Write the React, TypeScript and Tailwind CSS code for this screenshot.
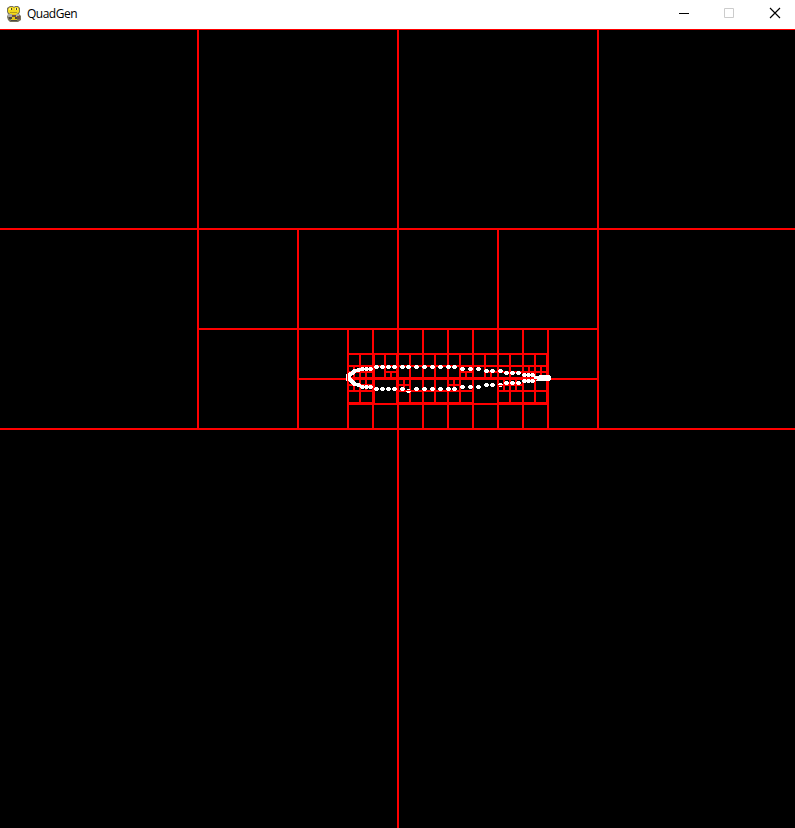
type Seg = [number, number, number, number];

// Each entry is x, y, width, height of one painted grid line.
const lines: Seg[] = [
  [0, 29, 795, 1],
  [0, 228, 795, 2], [0, 428, 795, 2],
  [197, 29, 2, 401], [397, 29, 2, 799], [597, 29, 2, 401],
  [197, 328, 402, 2], [297, 228, 2, 202], [497, 228, 2, 202],
  [297, 378, 302, 2],
  [347, 328, 2, 102], [547, 328, 2, 102],
  [372, 328, 2, 102], [422, 328, 2, 102], [447, 328, 2, 102], [472, 328, 2, 102], [522, 328, 2, 102],
  [347, 353, 202, 2], [347, 403, 202, 2], [347, 402, 27, 2], [397, 402, 77, 2], [497, 402, 52, 2],
  [347, 377, 202, 3], [372, 353, 3, 52], [396, 353, 3, 52], [546, 353, 3, 52],
  [347, 365, 202, 2],
  [359, 353, 2, 52], [384, 353, 2, 27], [409, 353, 2, 52], [434, 353, 2, 52],
  [459, 353, 2, 52], [484, 353, 2, 27], [509, 353, 2, 52], [534, 353, 2, 52],
  [347, 390, 27, 2], [397, 390, 77, 2], [497, 390, 52, 2],
  [347, 371, 27, 2], [353, 365, 2, 26], [365, 365, 2, 26], [347, 384, 27, 2],
  [384, 371, 14, 2], [390, 371, 2, 8],
  [403, 378, 2, 13], [397, 384, 13, 2],
  [453, 378, 2, 13], [447, 384, 13, 2],
  [459, 371, 14, 2], [465, 371, 2, 8], [484, 371, 14, 2], [490, 371, 2, 8],
  [497, 371, 52, 2], [503, 378, 2, 13], [497, 384, 26, 2], [515, 378, 2, 13],
  [528, 365, 2, 14], [540, 365, 2, 14], [528, 378, 2, 5],
];

const upper: [number, number][] = [
  [350, 374], [352, 373], [354, 371], [358, 370], [362, 369], [366, 369], [370, 369],
  [376, 367], [382, 367], [388, 367], [394, 367], [402, 367], [408, 367], [416, 367], [424, 367],
  [432, 367], [440, 367], [448, 367], [454, 367], [462, 369], [470, 369], [478, 369], [486, 371],
  [492, 371], [500, 371], [506, 373], [512, 373], [518, 373], [524, 375], [528, 375], [532, 375],
];
const lower: [number, number][] = [
  [350, 380], [352, 382], [354, 384], [358, 385], [362, 387], [366, 387], [370, 387],
  [376, 389], [382, 389], [388, 389], [394, 389], [402, 389], [408, 391], [416, 389], [424, 389],
  [432, 389], [440, 389], [448, 389], [454, 389], [462, 387], [470, 387], [478, 387], [486, 385],
  [492, 385], [500, 385], [506, 383], [512, 383], [518, 383], [524, 381], [528, 381], [532, 381],
];

function Dot({ x, y }: { x: number; y: number }) {
  return <path d={`M${x - 1} ${y - 2}h3v1h1v2h-1v1h-3v-1h-1v-2h1z`} fill="#fff" />;
}

function Snake() {
  return (
    <svg className="ml-[6px] h-4 w-4 shrink-0" viewBox="0 0 16 16" aria-hidden="true">
      <path d="M4 0h3l1 1 1-1h3l2 2v4l-1 2 2 2v4l-3 2H4l-2-2-1-3 1-3-1-2V2z" fill="#77735d" />
      <path d="M4 1h3l1 1 1-1h3l1 2v3l-2 2H4L2 6V3z" fill="#f3d91c" />
      <path d="M3 2h3v2H3zM9 2h3v2H9z" fill="#fff56b" />
      <path d="M5 2h1v2H5zM10 2h1v2h-1z" fill="#504526" />
      <path d="M4 6h7v1H4z" fill="#b59c1d" />
      <path d="M5 8h6v6H5z" fill="#e4c51b" />
      <path d="M2 8h4v3H2zM10 8h3v2h-3z" fill="#aaa9a3" />
      <path d="M6 9h4v2H6zM11 10h3v3h-3z" fill="#735047" />
      <path d="M3 11h3v2H3zM9 11h2v2H9zM5 14h6v1H5z" fill="#4b4840" />
    </svg>
  );
}

export default function App() {
  return (
    <main className="flex h-[828px] w-[795px] flex-col overflow-hidden bg-black">
      <header className="flex h-[29px] shrink-0 items-start bg-white">
        <div className="flex h-[27px] items-center">
          <Snake />
          <h1 className="ml-[5px] font-['Open_Sans',sans-serif] text-[12px] leading-4 font-normal tracking-[-0.5px] text-black">QuadGen</h1>
        </div>
        <div className="ml-auto flex h-[27px]">
          <button aria-label="Minimize" className="w-[45px]">
            <svg width="45" height="27" shapeRendering="crispEdges"><path d="M20 13h10v1H20z" /></svg>
          </button>
          <button aria-label="Maximize" disabled className="w-[45px]">
            <svg width="45" height="27"><path d="M20.5 8.5h9v9h-9z" fill="none" stroke="#ccc" /></svg>
          </button>
          <button aria-label="Close" className="w-[46px]">
            <svg width="46" height="27"><path d="M21 8l10 10M31 8L21 18" fill="none" stroke="#000" strokeWidth="1.15" /></svg>
          </button>
        </div>
      </header>
      <svg className="block shrink-0" width="795" height="799" viewBox="0 29 795 799" shapeRendering="crispEdges">
        <g fill="#f00">
          {lines.map(([x, y, w, h], i) => <rect key={i} x={x} y={y} width={w} height={h} />)}
        </g>
        {upper.map(([x, y], i) => <Dot key={i} x={x} y={y} />)}
        {lower.map(([x, y], i) => <Dot key={i} x={x} y={y} />)}
        <path d="M346 374h1v7h-1zM348 374h3v7h-3zM534 376h5v-1h11v1h1v4h-1v1h-14v-1h-2z" fill="#fff" />
        <path d="M534 379h3v1h-3zM406 390h5v1h-5zM498 385h5v1h-5z" fill="#f00" />
      </svg>
    </main>
  );
}
